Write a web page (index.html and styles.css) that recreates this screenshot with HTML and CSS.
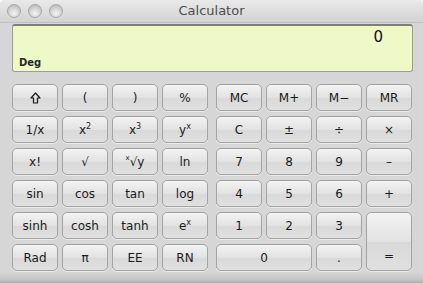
FILE: index.html
```html
<!DOCTYPE html>
<html lang="en">
<head>
  <meta charset="UTF-8">
  <title>Calculator</title>
  <link rel="stylesheet" href="styles.css">
</head>
<body>
  <div class="window">
    <div class="titlebar">
      <div class="lights">
        <span class="light"></span>
        <span class="light"></span>
        <span class="light"></span>
      </div>
      <div class="title">Calculator</div>
    </div>

    <div class="display">
      <div class="value">0</div>
      <div class="mode">Deg</div>
    </div>

    <div class="keys">
      <div class="pad sci">
        <button><svg class="shift" width="11" height="12" viewBox="0 0 11 12"><path d="M5.5 1 L10 6 L7.5 6 L7.5 11 L3.5 11 L3.5 6 L1 6 Z" fill="none" stroke="#1a1a1a" stroke-width="1.2" stroke-linejoin="round"/></svg></button>
        <button>(</button>
        <button>)</button>
        <button>%</button>

        <button>1/x</button>
        <button>x<sup>2</sup></button>
        <button>x<sup>3</sup></button>
        <button>y<sup>x</sup></button>

        <button>x!</button>
        <button>&#8730;</button>
        <button><sup class="idx">x</sup>&#8730;y</button>
        <button>ln</button>

        <button>sin</button>
        <button>cos</button>
        <button>tan</button>
        <button>log</button>

        <button>sinh</button>
        <button>cosh</button>
        <button>tanh</button>
        <button>e<sup>x</sup></button>

        <button>Rad</button>
        <button>&#960;</button>
        <button>EE</button>
        <button>RN</button>
      </div>

      <div class="pad num">
        <button>MC</button>
        <button>M+</button>
        <button>M&#8722;</button>
        <button>MR</button>

        <button>C</button>
        <button>&#177;</button>
        <button>&#247;</button>
        <button>&#215;</button>

        <button>7</button>
        <button>8</button>
        <button>9</button>
        <button>&#8211;</button>

        <button>4</button>
        <button>5</button>
        <button>6</button>
        <button>+</button>

        <button>1</button>
        <button>2</button>
        <button>3</button>
        <button class="equals">=</button>

        <button class="zero">0</button>
        <button>.</button>
      </div>
    </div>
  </div>
</body>
</html>
```

FILE: styles.css
```css
body {
  margin: 0;
  background: #fff;
  font-family: "DejaVu Sans", "Liberation Sans", sans-serif;
}

.window {
  width: 423px;
  height: 283px;
  background: linear-gradient(#d6d6d6, #d6d6d6 272px, #c4c4c4 280px, #a8a8a8);
  border-radius: 5px 5px 0 0;
  overflow: hidden;
}

.titlebar {
  position: relative;
  height: 22px;
  background: linear-gradient(#e9e9e9, #d3d3d3);
  border-bottom: 1px solid #c2c2c2;
  display: flex;
  align-items: center;
}

.lights {
  display: flex;
  gap: 7px;
  padding-left: 7px;
}

.light {
  width: 14px;
  height: 14px;
  border-radius: 50%;
  background: radial-gradient(circle at 50% 70%, #f4f4f4, #d0d0d0 55%, #bdbdbd 80%);
  border: 1px solid #a6a6a6;
  box-sizing: border-box;
}

.title {
  position: absolute;
  left: 0;
  right: 0;
  top: 3px;
  text-align: center;
  font-size: 13px;
  color: #4d4d4d;
}

.display {
  margin: 1px 10px 0 12px;
  height: 48px;
  box-sizing: border-box;
  background: #eff9c8;
  border: 1px solid #9c9c9c;
  border-top: 2px solid #7e7e7e;
  border-radius: 3px;
  display: flex;
  flex-direction: column;
  justify-content: space-between;
  padding: 2px 6px 3px 6px;
}

.value {
  text-align: right;
  font-size: 15px;
  padding-right: 23px;
  color: #111;
}

.mode {
  font-size: 10px;
  font-weight: bold;
  color: #2a2a2a;
}

.keys {
  display: flex;
  gap: 8px;
  padding: 12px 0 0 12px;
}

.pad {
  display: grid;
  grid-template-columns: repeat(4, 46px);
  grid-auto-rows: 27px;
  column-gap: 4px;
  row-gap: 5px;
}

.pad button {
  font-family: "DejaVu Sans", "Liberation Sans", sans-serif;
  font-size: 12px;
  color: #1a1a1a;
  padding: 0;
  border: 1px solid #a3a3a3;
  border-radius: 5px;
  background: linear-gradient(#f3f3f3, #e2e2e2 50%, #d9d9d9 51%, #e0e0e0);
  box-shadow: 0 1px 0 rgba(255, 255, 255, 0.5);
}

.pad button .shift {
  display: block;
  margin: 1px auto 0;
}

.pad button sup {
  font-size: 8px;
  vertical-align: 5px;
  line-height: 0;
}

.pad button .idx {
  font-size: 7px;
  vertical-align: 6px;
  margin-right: 0;
}

.num .equals {
  grid-column: 4;
  grid-row: 5 / span 2;
  padding-top: 28px;
}

.num .zero {
  grid-column: 1 / span 2;
}
```
